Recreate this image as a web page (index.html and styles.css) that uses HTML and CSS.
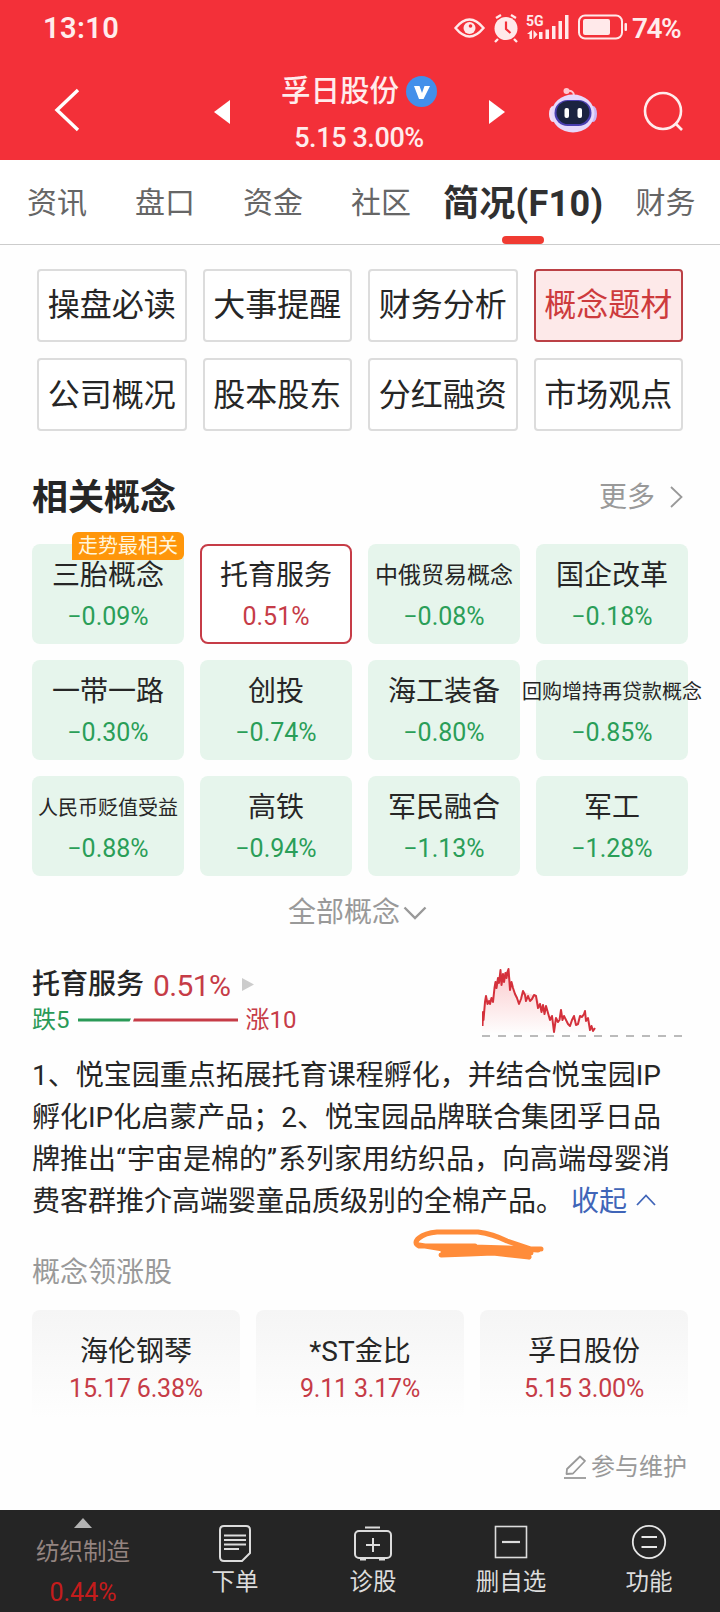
FILE: index.html
```html
<!DOCTYPE html>
<html lang="zh-CN">
<head>
    <meta charset="UTF-8">
    <link rel="stylesheet" href="styles.css">
    <title>孚日股份</title>
</head>
<body>

<header class="header">
    <div class="status">
        <span class="time">13:10</span>
        <svg class="status-icons" width="178" height="30" viewBox="0 0 178 30">
            <g fill="none" stroke="#ffe9ea" stroke-width="2.4">
                <path d="M1.5 15 Q15.500 -2 29.500 15 Q15.500 32 1.500 15Z"/>
                <rect x="125" y="2.500" width="43" height="23" rx="6" stroke-width="2"/>
                <path d="M42 5 l5-3 M57 2 l5 3 M44 26 l-3 3 M60 26 l3 3"/>
            </g>
            <g fill="#ffe9ea">
                <circle cx="15.500" cy="15" r="6"/>
                <circle cx="52" cy="15.500" r="11.500"/>
                <rect x="129" y="6" width="27" height="16" rx="2"/>
                <rect x="170.500" y="10" width="2.500" height="8" rx="1"/>
                <path d="M73 21 l5-4 v9 h-2.500 v-5z M79.500 17 l4 4.500 -4 4.500z"/>
                <rect x="85" y="19" width="3.500" height="7"/>
                <rect x="91.500" y="16.500" width="3.500" height="9.500"/>
                <rect x="98" y="13" width="3.500" height="13"/>
                <rect x="104.500" y="8" width="3.500" height="18"/>
                <rect x="111" y="2" width="3.500" height="24"/>
                <text x="72" y="13" class="net">5G</text>
            </g>
            <path d="M52 8.500 v7.500 l4.500 4" fill="none" stroke="#f33039" stroke-width="2.2"/>
            <circle cx="16.500" cy="13" r="1.800" fill="#f33039"/>
        </svg>
        <span class="battery">74%</span>
    </div>
    <div class="titlebar">
        <svg class="back" width="26" height="44" viewBox="0 0 26 44"><path d="M24 2 L3 22 L24 42" fill="none" stroke="#fff" stroke-width="3.400"/></svg>
        <svg class="prev" width="16" height="24" viewBox="0 0 16 24"><path d="M16 0 V24 L0 12Z" fill="#fff"/></svg>
        <div class="stock">
            <div class="stock-name">孚日股份
                <svg width="31" height="31" viewBox="0 0 31 31"><circle cx="15.500" cy="15.500" r="15.500" fill="#438fea"/><path d="M8 10 h5.500 l2.500 7 2.500-7 h5.500 l-6.500 13 h-4.500z" fill="#fff"/></svg>
            </div>
            <div class="stock-price">5.15 3.00%</div>
        </div>
        <svg class="next" width="16" height="24" viewBox="0 0 16 24"><path d="M0 0 V24 L16 12Z" fill="#fff"/></svg>
        <svg class="robot" width="48" height="46" viewBox="0 0 48 46">
            <path d="M18 4 Q25 3 25 9" fill="none" stroke="#ffc6d0" stroke-width="2"/>
            <circle cx="17.500" cy="4" r="3" fill="#ffc6d0"/>
            <ellipse cx="4" cy="27" rx="4" ry="8" fill="#f3dcf2"/>
            <ellipse cx="44" cy="27" rx="4" ry="8" fill="#c9b4f5"/>
            <ellipse cx="24" cy="26.500" rx="21.500" ry="19" fill="#e6d8fb"/>
            <rect x="5.500" y="13" width="37" height="26" rx="13" fill="#4a3fb0"/>
            <rect x="7.500" y="14" width="33" height="23" rx="11.500" fill="#1b2341"/>
            <rect x="15.500" y="21" width="4.500" height="10" rx="2" fill="#fff"/>
            <rect x="28.500" y="21" width="4.500" height="10" rx="2" fill="#fff"/>
        </svg>
        <svg class="search" width="42" height="42" viewBox="0 0 42 42"><g fill="none" stroke="#ffecec" stroke-width="2.600"><circle cx="20" cy="20" r="18"/><path d="M32 32 l7 7"/></g></svg>
    </div>
</header>

<nav class="tabs">
    <span>资讯</span>
    <span>盘口</span>
    <span>资金</span>
    <span>社区</span>
    <span class="current">简况(F10)</span>
    <span>财务</span>
</nav>

<main>
    <div class="menu">
        <div>操盘必读</div>
        <div>大事提醒</div>
        <div>财务分析</div>
        <div class="on">概念题材</div>
        <div>公司概况</div>
        <div>股本股东</div>
        <div>分红融资</div>
        <div>市场观点</div>
    </div>

    <div class="section-head">
        <h2>相关概念</h2>
        <span class="more">更多
            <svg width="13" height="22" viewBox="0 0 13 22"><path d="M1 1 L11.500 11 L1 21" fill="none" stroke="#999" stroke-width="1.800"/></svg>
        </span>
    </div>

    <div class="concepts">
        <div class="card"><b class="badge">走势最相关</b><p>三胎概念</p><i>−0.09%</i></div>
        <div class="card selected"><p>托育服务</p><i>0.51%</i></div>
        <div class="card"><p class="medium">中俄贸易概念</p><i>−0.08%</i></div>
        <div class="card"><p>国企改革</p><i>−0.18%</i></div>
        <div class="card"><p>一带一路</p><i>−0.30%</i></div>
        <div class="card"><p>创投</p><i>−0.74%</i></div>
        <div class="card"><p>海工装备</p><i>−0.80%</i></div>
        <div class="card"><p class="small">回购增持再贷款概念</p><i>−0.85%</i></div>
        <div class="card"><p class="small">人民币贬值受益</p><i>−0.88%</i></div>
        <div class="card"><p>高铁</p><i>−0.94%</i></div>
        <div class="card"><p>军民融合</p><i>−1.13%</i></div>
        <div class="card"><p>军工</p><i>−1.28%</i></div>
    </div>

    <div class="all">全部概念
        <svg width="24" height="14" viewBox="0 0 24 14"><path d="M1.500 1.500 L12 12 L22.500 1.500" fill="none" stroke="#999" stroke-width="2.400"/></svg>
    </div>

    <div class="detail">
        <div>
            <div class="detail-name"><span>托育服务</span> <em>0.51%</em>
                <svg width="12" height="13" viewBox="0 0 12 13"><path d="M0 0 V13 L12 6.500Z" fill="#ccc"/></svg>
            </div>
            <div class="ratio">
                <span class="green">跌5</span>
                <svg width="160" height="4" viewBox="0 0 160 4"><path d="M0 0.500 H53 L51.500 3.500 H0Z" fill="#2a9a57"/><path d="M56 0.500 H160 V3.500 H55Z" fill="#c63c47"/></svg>
                <span class="red">涨10</span>
            </div>
        </div>
        <svg class="chart" width="202" height="72" viewBox="0 0 202 72">
            <defs>
                <linearGradient id="fade" x1="0" y1="0" x2="0" y2="1">
                    <stop offset="0" stop-color="#f33039" stop-opacity="0.250"/>
                    <stop offset="1" stop-color="#f33039" stop-opacity="0"/>
                </linearGradient>
            </defs>
            <path fill="url(#fade)" d="M0 58 L3 34 L12 30 L14 16 L20 8 L27 4 L30 22 L38 38 L42 26 L54 30 L62 44 L74 54 L82 56 L98 52 L104 49 L112 63 V68 H0Z"/>
            <polyline fill="none" stroke="#d4303b" stroke-width="2" stroke-linejoin="round" points="0.500,60 1,46 1.500,54 3,36 4,30 5.500,38 7,35 8,38 9.500,32 11,36 12.500,22 13.500,16 14.500,22 16,12 17,17 18.500,4 19.500,19 21,8 22,16 23.500,7 24.500,12 25.500,6 26.500,3 28,24 29.500,16 31,22 33,28 35,32 37,38 39,33 41,25 43,29 44,35 46,30 48,35 50,33 52,29 54,30 56,42 58,38 59.500,46 61,39 62.500,48 64,40 66,47 68,54 70,50 72,66 74,52 76,56 77.500,54 79,44 80.500,54 82,50 84,54 86,58 88,60 90,54 92,50 94,59 96,58 98,50 100,51 102,48 103,45 104,55 106,52 108,64 109.500,60 111,65 113,62"/>
            <path d="M0 70 H202" stroke="#bbb" stroke-width="2" stroke-dasharray="8 8"/>
        </svg>
    </div>

    <p class="intro">1、悦宝园重点拓展托育课程孵化，并结合悦宝园IP<br>孵化IP化启蒙产品；2、悦宝园品牌联合集团孚日品<br>牌推出<q>宇宙是棉的</q>系列家用纺织品，向高端母婴消<br>费客群推介高端婴童品质级别的全棉产品。<a class="fold">收起<svg width="20" height="12" viewBox="0 0 20 12"><path d="M1 11 L10 1.500 L19 11" fill="none" stroke="#4065b8" stroke-width="1.800"/></svg></a>
        <svg class="marker" width="132" height="34" viewBox="0 0 132 34"><path fill="none" stroke="#ff8c3a" stroke-width="5" stroke-linecap="round" stroke-linejoin="round" d="M62 17 H6 Q0 14 6 9 Q12 4 24 3 H65 Q80 5 94 12 L118 20 H128 M6 16 L30 20 L60 18 L95 19 L125 21 M28 26 L56 25 L80 24 L116 28 M30 23 L70 21 L112 25 L116 28 M64 22 L118 24"/></svg>
    </p>

    <h3>概念领涨股</h3>
    <div class="leaders">
        <div><p>海伦钢琴</p><span>15.17 6.38%</span></div>
        <div><p>*ST金比</p><span>9.11 3.17%</span></div>
        <div><p>孚日股份</p><span>5.15 3.00%</span></div>
    </div>

    <div class="edit">
        <svg width="23" height="24" viewBox="0 0 23 24"><g fill="none" stroke="#999" stroke-width="1.800" stroke-linejoin="round"><path d="M3 14 L16 1.500 L21 6 L9 18.500 L2.500 19Z"/><path d="M0 23 H22"/></g></svg>参与维护
    </div>
</main>

<footer class="bottom">
    <div class="sector">
        <svg width="18" height="10" viewBox="0 0 18 10"><path d="M9 0 L18 10 H0Z" fill="#b3b3b3"/></svg>
        <span>纺织制造</span>
        <em>0.44%</em>
    </div>
    <div class="tool">
        <svg width="36" height="40" viewBox="0 0 36 40"><g fill="none" stroke="#dcdcdc" stroke-width="2"><path d="M7 3 H29 Q33 3 33 7 V30 L25 38 H7 Q3 38 3 34 V7 Q3 3 7 3Z"/><path d="M7 12.500 H29 M7 17 H29 M7 21.500 H29 M7 26 H22"/></g></svg>
        <span>下单</span>
    </div>
    <div class="tool">
        <svg width="40" height="40" viewBox="0 0 40 40"><g fill="none" stroke="#dcdcdc" stroke-width="2"><rect x="2" y="8" width="36" height="27" rx="4"/><path d="M12 4.500 H27 M20 15 V29 M13 22 H27"/><path d="M7 36 H13 M26 36 H32" stroke-width="3"/></g></svg>
        <span>诊股</span>
    </div>
    <div class="tool">
        <svg width="36" height="40" viewBox="0 0 36 40"><g fill="none" stroke="#dcdcdc" stroke-width="1.600"><rect x="2.500" y="3.500" width="31" height="31"/><path d="M9 19 H27" stroke-width="2.200"/></g></svg>
        <span>删自选</span>
    </div>
    <div class="tool">
        <svg width="36" height="40" viewBox="0 0 36 40"><g fill="none" stroke="#e6e6e6" stroke-width="1.800"><circle cx="18" cy="19" r="16.200"/><path d="M10.500 14 H26 M10.500 24 H26"/></g></svg>
        <span>功能</span>
    </div>
</footer>

</body>
</html>
```
FILE: styles.css
```css
* {
    box-sizing: border-box;
}

body {
    margin: 0;
    width: 720px;
    height: 1612px;
    display: flex;
    flex-direction: column;
    background-color: #fefefe;
    color: #262626;
    font-family: Roboto, "Noto Sans CJK SC", sans-serif;
    font-size: 28px;
    white-space: nowrap;
    overflow: hidden;
}

h2, h3, p {
    margin: 0;
}

i, em {
    font-style: normal;
}

svg {
    display: block;
    flex-shrink: 0;
}

/* red header */
.header {
    height: 160px;
    background-color: #f33039;
    color: #ffecec;
}

.status {
    display: flex;
    align-items: center;
    height: 56px;
    padding: 0 38px 0 43px;
    font-size: 29px;
    font-weight: 600;
}

.time {
    letter-spacing: 0.4px;
}

.status-icons {
    margin-left: auto;
}

.net {
    font-size: 14px;
    font-weight: bold;
}

.battery {
    width: 50px;
    font-size: 28px;
    letter-spacing: -1.5px;
}

.titlebar {
    display: flex;
    height: 104px;
    padding-left: 54px;
}

.back {
    margin-top: 32px;
}

.prev {
    margin: 44px 0 0 134px;
}

.stock {
    width: 258px;
    text-align: center;
}

.stock-name {
    display: flex;
    align-items: center;
    justify-content: center;
    gap: 7px;
    height: 40px;
    margin-top: 15px;
    font-size: 29.5px;
    font-weight: 500;
    line-height: 42px;
}

.stock-price {
    margin-top: 7px;
    line-height: 40px;
    font-size: 27px;
    font-weight: 500;
    letter-spacing: -0.4px;
}

.next {
    margin: 44px 0 0 1px;
}

.robot {
    margin: 31px 0 0 44px;
}

.search {
    margin: 35px 0 0 46px;
}

/* tabs */
.tabs {
    display: flex;
    align-items: center;
    gap: 48px;
    height: 85px;
    padding-left: 27px;
    border-bottom: 1px solid #ccc;
    background-color: #fff;
    color: #666;
    font-size: 30px;
    line-height: 86px;
}

.tabs span {
    height: 84px;
}

.tabs .current {
    position: relative;
    margin: 0 -16px;
    color: #303030;
    font-size: 36px;
    font-weight: bold;
    line-height: 88px;
    letter-spacing: 0.3px;
}

.tabs .current::after {
    content: "";
    position: absolute;
    left: 59px;
    bottom: 0;
    width: 42px;
    height: 8px;
    border-radius: 4px;
    background-color: #f03b32;
}

/* menu buttons */
.menu {
    display: grid;
    grid-template-columns: repeat(4, 1fr);
    gap: 16px;
    padding: 24px 37px 0;
}

.menu div {
    height: 73px;
    border: 2px solid #dcdcdc;
    border-radius: 4px;
    background-color: #fff;
    font-size: 32px;
    line-height: 69px;
    display: flex;
    justify-content: center;
}

.menu div:nth-child(n+5) {
    line-height: 71px;
}

.menu .on {
    border-color: #bb4045;
    background-color: #fde9e9;
    color: #cd3b3d;
}

.section-head {
    display: flex;
    align-items: center;
    justify-content: space-between;
    height: 50px;
    margin-top: 41px;
    padding: 0 37px 0 32px;
}

.section-head h2 {
    font-size: 36px;
    font-weight: bold;
    line-height: 44px;
    padding-top: 1px;
}

.more {
    display: flex;
    align-items: center;
    gap: 15px;
    color: #999;
    line-height: 43px;
}

/* concept cards */
.concepts {
    display: grid;
    grid-template-columns: repeat(4, 152px);
    gap: 16px;
    margin-top: 22px;
    padding-left: 32px;
}

.card {
    position: relative;
    display: flex;
    flex-direction: column;
    align-items: center;
    height: 100px;
    padding-top: 12px;
    border-radius: 8px;
    background-color: #e6f5ec;
}

.card p {
    line-height: 40px;
    margin-bottom: 6px;
}

.card .medium {
    font-size: 23px;
}

.card .small {
    font-size: 20px;
}

.card i {
    color: #2a9e58;
    font-size: 25px;
    line-height: 30px;
}

.selected {
    padding-top: 10px;
    border: 2px solid #c63c47;
    background-color: #fff;
}

.selected i {
    color: #c63c47;
}

.badge {
    position: absolute;
    top: -12px;
    right: 0;
    width: 112px;
    height: 28px;
    border-radius: 6px 6px 6px 0;
    background-color: #ff960a;
    color: #fff5dc;
    font-size: 20px;
    font-weight: normal;
    line-height: 29px;
    text-align: center;
}

.all {
    display: flex;
    align-items: center;
    justify-content: center;
    gap: 3px;
    height: 40px;
    line-height: 38px;
    margin: 17px 5px 0 0;
    color: #999;
}

/* selected concept */
.detail {
    display: flex;
    justify-content: space-between;
    height: 73px;
    margin-top: 31px;
    padding: 0 36px 0 32px;
}

.detail-name {
    display: flex;
    align-items: center;
    gap: 9px;
    height: 40px;
    padding-top: 1px;
    font-weight: 500;
    line-height: 38px;
}

.detail-name em {
    padding-top: 2px;
    color: #c63c47;
    font-size: 30px;
    font-weight: normal;
    letter-spacing: -0.6px;
}

.detail-name svg {
    margin-left: 3px;
}

.ratio {
    display: flex;
    align-items: center;
    gap: 8px;
    height: 32px;
    font-size: 24px;
    line-height: 32px;
}

.green {
    color: #2a9a57;
}

.red {
    color: #c63c47;
}

.chart {
    margin-top: 2px;
}

.intro {
    position: relative;
    margin-top: 18px;
    padding-left: 32px;
    line-height: 42px;
}

.intro q {
    quotes: "“" "”";
}

.intro q::before, .intro q::after {
    letter-spacing: 1px;
}

.fold {
    margin-left: 7px;
    color: #4065b8;
}

.fold svg {
    display: inline-block;
    margin-left: 9px;
    vertical-align: 5px;
}

.marker {
    position: absolute;
    left: 413px;
    top: 174px;
}

h3 {
    margin-top: 30px;
    padding-left: 32px;
    color: #999;
    font-size: 28px;
    font-weight: normal;
    line-height: 40px;
}

.leaders {
    display: flex;
    gap: 16px;
    margin-top: 17px;
    padding-left: 32px;
}

.leaders div {
    width: 208px;
    height: 108px;
    padding-top: 22px;
    border-radius: 8px 8px 0 0;
    background: linear-gradient(#f5f5f5, #fefefe);
    text-align: center;
}

.leaders p {
    line-height: 40px;
}

.leaders span {
    display: block;
    color: #c63c47;
    font-size: 25px;
    line-height: 34px;
    letter-spacing: -0.2px;
}

.edit {
    display: flex;
    align-items: center;
    justify-content: flex-end;
    gap: 4px;
    height: 36px;
    margin-top: 31px;
    padding-right: 33px;
    color: #999;
    font-size: 24px;
    line-height: 38px;
}

/* bottom bar */
.bottom {
    display: flex;
    height: 102px;
    margin-top: auto;
    background-color: #252525;
    color: #dcdcdc;
    font-size: 23.5px;
}

.sector {
    display: flex;
    flex-direction: column;
    align-items: center;
    width: 166px;
    padding-top: 8px;
    color: #948480;
}

.sector span {
    margin-top: 9px;
    line-height: 30px;
}

.sector em {
    margin-top: 10px;
    color: #c41c1c;
    font-size: 25px;
    line-height: 32px;
}

.tool {
    display: flex;
    flex-direction: column;
    align-items: center;
    width: 138px;
    padding-top: 13px;
}

.tool span {
    margin-top: 4px;
    line-height: 30px;
}
```
